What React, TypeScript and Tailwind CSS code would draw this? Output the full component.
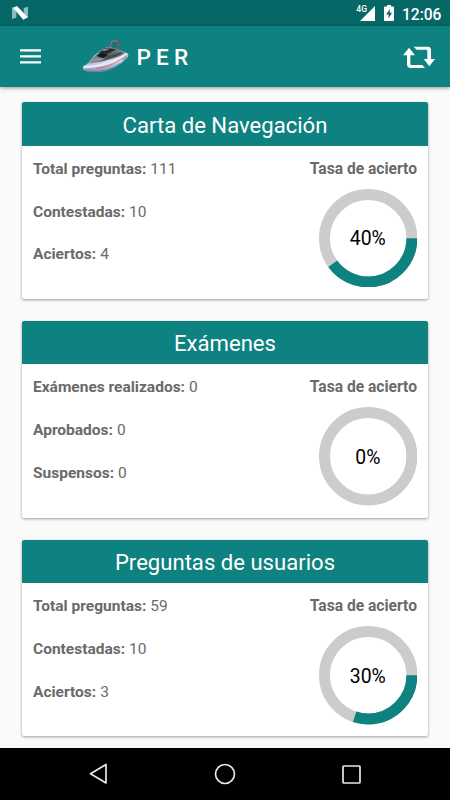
import React from "react";

type Stat = { label: string; value: number };
type CardData = { title: string; stats: Stat[]; rate: number };

const cards: CardData[] = [
  {
    title: "Carta de Navegación",
    stats: [
      { label: "Total preguntas:", value: 111 },
      { label: "Contestadas:", value: 10 },
      { label: "Aciertos:", value: 4 },
    ],
    rate: 40,
  },
  {
    title: "Exámenes",
    stats: [
      { label: "Exámenes realizados:", value: 0 },
      { label: "Aprobados:", value: 0 },
      { label: "Suspensos:", value: 0 },
    ],
    rate: 0,
  },
  {
    title: "Preguntas de usuarios",
    stats: [
      { label: "Total preguntas:", value: 59 },
      { label: "Contestadas:", value: 10 },
      { label: "Aciertos:", value: 3 },
    ],
    rate: 30,
  },
];

function NougatIcon() {
  return (
    <svg className="h-[14px] w-[16px]" viewBox="0 0 48 42">
      <path d="M0 3 L13 11 V35 L0 39 Z M35 6 L48 2 V36 L35 30 Z" fill="#8fbcbb" />
      <path d="M3 5 L15 0 L47 34 L34 41 Z" fill="#fff" />
    </svg>
  );
}

function SignalIcon() {
  return (
    <svg className="h-[15px] w-[15px]" viewBox="0 0 15 15">
      <path d="M15 0 V15 H0 Z" fill="#fff" />
    </svg>
  );
}

function BatteryIcon() {
  return (
    <svg className="h-[16px] w-[10px]" viewBox="0 0 10 16">
      <path d="M3 0 H7 V1.5 H9.2 Q10 1.5 10 2.3 V15.2 Q10 16 9.2 16 H0.8 Q0 16 0 15.2 V2.3 Q0 1.5 0.8 1.5 H3 Z" fill="#fff" />
      <path d="M6 3.8 L2.2 9.6 H4.6 V13.4 L8 7.7 H5.6 Z" fill="#076767" />
    </svg>
  );
}

function BoatIcon() {
  return (
    <svg className="h-[33px] w-[47px]" viewBox="34 29 141 99">
      <defs>
        <linearGradient id="hull" x1="0" y1="0" x2="0" y2="1">
          <stop offset="0" stopColor="#e9edf4" />
          <stop offset="0.6" stopColor="#d3d9e8" />
          <stop offset="1" stopColor="#7f89aa" />
        </linearGradient>
        <linearGradient id="deck" x1="0" y1="0" x2="1" y2="0">
          <stop offset="0" stopColor="#aab0b9" />
          <stop offset="0.4" stopColor="#50555d" />
          <stop offset="1" stopColor="#82878f" />
        </linearGradient>
      </defs>
      <path d="M110 57 L119 33 Q121 30 127 30 H144 Q149 30 148 36 L143 64 L135 66 L138 39 L124 38 L116 58 Z" fill="#54666f" />
      <path d="M124 36 H140 L137 52 L120 50 Z" fill="#1a7377" />
      <path d="M119 50 L123 34 Q124 32 128 32 H141" fill="none" stroke="#8599a1" strokeWidth="2" />
      <path d="M36 114 Q39 107 52 99 L72 75 L94 57 Q110 48 124 52 L151 61 L170 69 Q175 73 171 80 L153 98 Q130 115 105 122 Q72 129 49 123 Q35 119 36 114 Z" fill="url(#hull)" />
      <path d="M52 99 L70 79 L94 57 Q110 48 124 52 L151 61 L165 68 Q148 80 119 87 Q85 98 50 101 Z" fill="url(#deck)" />
      <path d="M54 98 L74 83 Q87 80 103 85 Q85 97 54 98 Z" fill="#8b9098" />
      <path d="M84 67 L104 54 L137 57 L109 72 Z" fill="#252b33" />
      <path d="M78 77 L91 68 L112 73 L98 83 Z" fill="#10161e" />
      <path d="M105 78 Q131 73 150 65 L156 69 Q137 80 108 86 Z" fill="#454b54" />
      <path d="M90 61 Q105 52 117 55 L104 61 Z" fill="#8d949c" />
      <path d="M38 110 Q87 109 124 94 Q151 84 169 71" fill="none" stroke="#e4e9f5" strokeWidth="7" />
      <path d="M76 114 Q100 112 120 104 Q142 95 155 84" fill="none" stroke="#c96a5c" strokeWidth="2.4" />
      <path d="M42 116 Q56 118 76 115" fill="none" stroke="#a5a9bd" strokeWidth="2.2" />
      <path d="M43 121 Q79 127 107 119 Q133 111 153 96" fill="none" stroke="#6f7b9e" strokeWidth="2.6" />
      <path d="M155 84 L171 71 L170 82 L155 95 Z" fill="#9ba3b6" />
    </svg>
  );
}

function RepeatIcon() {
  return (
    <svg className="h-[22px] w-[32px]" viewBox="0 0 96 66" fill="#fff">
      <path d="M18 5 L0 28 H12 V55 Q12 66 23 66 H66 L58 57 H25 Q22 57 22 54 V28 H36 Z" />
      <path d="M32 2 H74 Q84 2 84 12 V39 H96 L79 61 L62 39 H73 V14 Q73 11 70 11 H41 Z" />
    </svg>
  );
}

function StatusBar() {
  return (
    <div className="flex h-[26px] items-center bg-[#076767] pr-[8.5px] pl-[12px] text-white">
      <NougatIcon />
      <div className="ml-auto flex items-center">
        <span className="mt-[-7px] mr-[-7px] text-[8.5px] leading-[9px] font-medium">4G</span>
        <SignalIcon />
        <span className="ml-[9px] flex"><BatteryIcon /></span>
        <span className="mt-[3px] ml-[8px] text-[15.6px] leading-5 font-medium">12:06</span>
      </div>
    </div>
  );
}

function AppBar() {
  return (
    <header className="relative flex h-[61px] items-center bg-[#0e8181] pr-[15px] pl-5 text-white shadow-[0_1px_4px_rgba(0,0,0,0.4)]">
      <svg className="h-[15px] w-[21px]" viewBox="0 0 21 15" fill="#fff">
        <path d="M0 0.2 H21 V2.6 H0 Z M0 6.2 H21 V8.6 H0 Z M0 12.2 H21 V14.6 H0 Z" />
      </svg>
      <span className="mt-[-1px] ml-[41px] flex"><BoatIcon /></span>
      <h1 className="mt-[2px] ml-[7.5px] text-[22.6px] leading-7 font-medium tracking-[5.2px]">PER</h1>
      <span className="ml-auto flex"><RepeatIcon /></span>
    </header>
  );
}

function Ring({ rate }: { rate: number }) {
  const length = 2 * Math.PI * 43.7;
  return (
    <div className="grid size-[98.4px] place-items-center">
      <svg className="col-start-1 row-start-1 size-full" viewBox="0 0 98.4 98.4" fill="none" strokeWidth="11">
        <circle cx="49.2" cy="49.2" r="43.7" stroke="#cccccc" />
        {rate > 0 && (
          <circle cx="49.2" cy="49.2" r="43.7" stroke="#0e8181" strokeDasharray={`${(length * rate) / 100} ${length}`} />
        )}
      </svg>
      <span className="col-start-1 row-start-1 pt-[2.6px] text-[19.4px] leading-6 text-black">{rate}%</span>
    </div>
  );
}

function Card({ title, stats, rate }: CardData) {
  return (
    <section className="h-[196.9px] shrink-0 overflow-hidden rounded-[2px] bg-white shadow-[0_1px_3px_rgba(0,0,0,0.38)]">
      <h2 className="flex h-[43.6px] items-center justify-center bg-[#0e8181] pt-[2.4px] text-[22.1px] text-white">{title}</h2>
      <div className="flex justify-between pt-[12.9px] pr-[11px] pl-[11px] text-[15.5px] leading-[21px] text-[#6a6a6a]">
        <dl className="flex flex-col gap-[21.9px]">
          {stats.map((s) => (
            <div key={s.label} className="flex gap-[4px]">
              <dt className="font-bold">{s.label}</dt>
              <dd>{s.value}</dd>
            </div>
          ))}
        </dl>
        <div className="flex flex-col items-end gap-[9.1px]">
          <span className="text-[15.6px] font-bold">Tasa de acierto</span>
          <Ring rate={rate} />
        </div>
      </div>
    </section>
  );
}

function NavBar() {
  return (
    <nav className="flex h-[52px] shrink-0 items-center bg-black pl-[89px]">
      <svg className="h-[22px] w-[19px]" viewBox="0 0 19 22" fill="none" stroke="#e8e8e8" strokeWidth="1.7" strokeLinejoin="round">
        <path d="M17 1.5 V20 L1.5 10.8 Z" />
      </svg>
      <svg className="ml-[106px] size-[22px]" viewBox="0 0 22 22" fill="none" stroke="#e8e8e8" strokeWidth="1.7">
        <circle cx="11" cy="11" r="9.5" />
      </svg>
      <svg className="ml-[106px] size-[19px]" viewBox="0 0 19 19" fill="none" stroke="#e8e8e8" strokeWidth="1.7">
        <rect x="1" y="1" width="17" height="17" rx="0.8" />
      </svg>
    </nav>
  );
}

export default function App() {
  return (
    <div className="flex h-[800px] w-[450px] flex-col overflow-hidden bg-[#fafafa] font-[Roboto,sans-serif]">
      <StatusBar />
      <AppBar />
      <main className="flex min-h-0 flex-1 flex-col gap-[21.8px] overflow-hidden px-[22px] pt-[15.2px]">
        {cards.map((c) => (
          <Card key={c.title} {...c} />
        ))}
      </main>
      <NavBar />
    </div>
  );
}
